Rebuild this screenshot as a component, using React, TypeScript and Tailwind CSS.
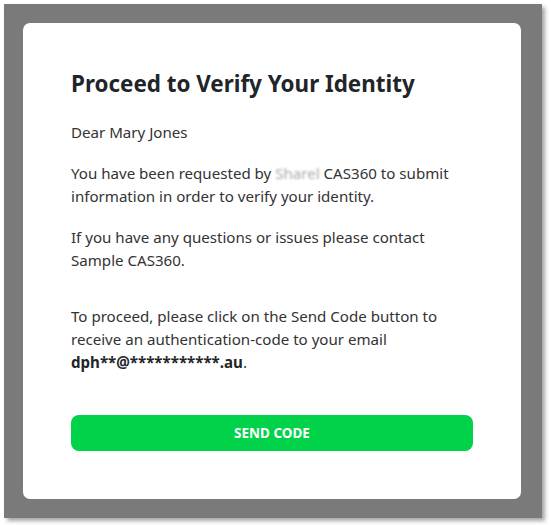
import React from "react";

export default function App() {
  return (
    <div className="w-[551px] h-[525px] bg-white pl-[4px] pt-[4px]" style={{ fontFamily: '"Noto Sans", "Open Sans", sans-serif' }}>
      <div className="w-[538px] h-[514px] bg-[#7a7a7a] pt-[19px] pl-[19px] shadow-[3px_3px_4px_rgba(0,0,0,0.35)]">
        <div className="w-[498px] h-[476px] bg-white rounded-[7px] px-[48px] pt-[47px] text-[#333333]">
          <h1 className="text-[22.4px] leading-[28px] font-bold text-[#212529]">
            Proceed to Verify Your Identity
          </h1>
          <p className="mt-[23px] text-[15.1px] leading-[23px]">Dear Mary Jones</p>
          <p className="mt-[18px] text-[15.1px] leading-[23px]">
            You have been requested by{" "}
            <span className="text-[#a9a9a9] blur-[0.8px]">Sharel</span> CAS360 to submit
            information in order to verify your identity.
          </p>
          <p className="mt-[18px] text-[15.1px] leading-[23px]">
            If you have any questions or issues please contact Sample CAS360.
          </p>
          <p className="mt-[33px] text-[15.1px] leading-[23px]">
            To proceed, please click on the Send Code button to receive an authentication-code to your email{" "}
            <span className="font-bold text-[#212529]">dph**@***********.au</span>.
          </p>
          <button className="mt-[41px] w-full h-[36px] rounded-[8px] bg-[#00d34a] text-white text-[13.5px] font-bold">
            SEND CODE
          </button>
        </div>
      </div>
    </div>
  );
}
